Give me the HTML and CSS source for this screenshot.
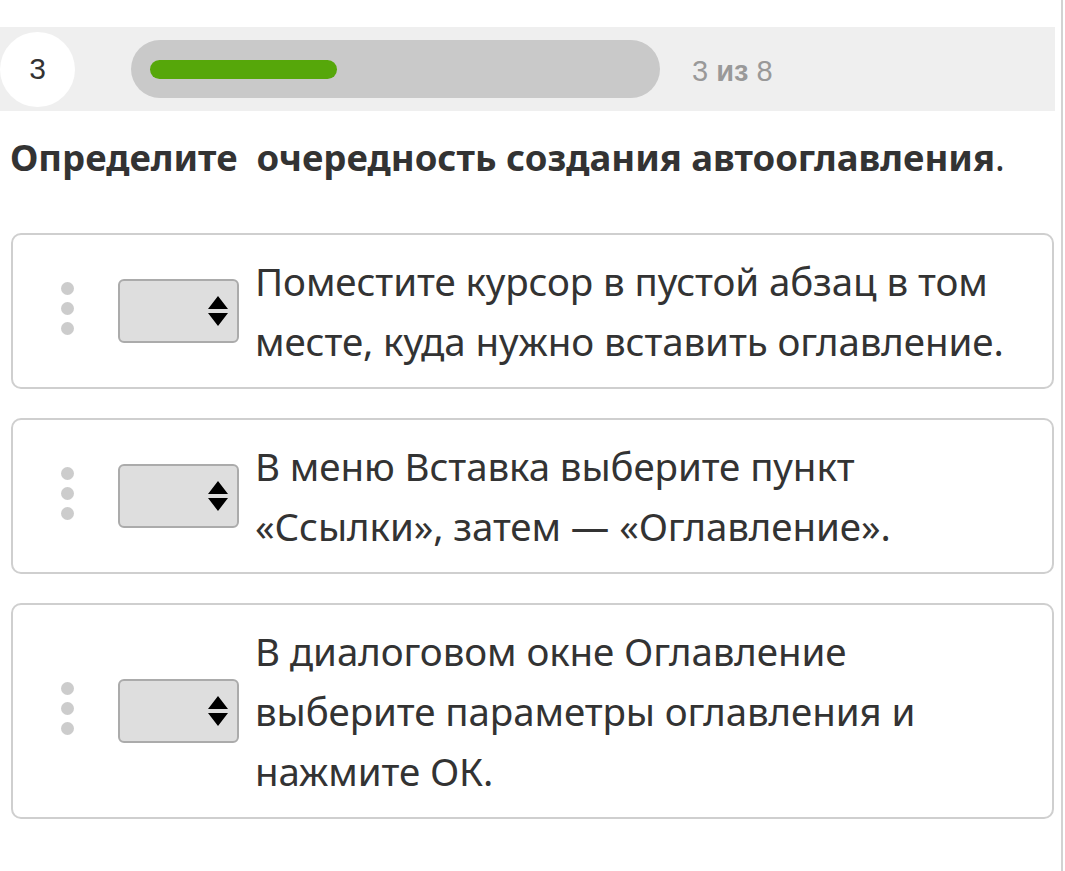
FILE: index.html
```html
<!DOCTYPE html>
<html lang="ru">
<head>
<meta charset="utf-8">
<title>Вопрос 3</title>
<link rel="stylesheet" href="styles.css">
</head>
<body>
<div class="page">
  <div class="topbar">
    <div class="num">3</div>
    <div class="track"><div class="fill" style="width:187px"></div></div>
    <div class="count">3 <b>из</b> 8</div>
  </div>
  <h1 class="title">Определите&nbsp; очередность создания автооглавления<span class="period">.</span></h1>
  <div class="list">
    <div class="card">
      <div class="handle"><i></i><i></i><i></i></div>
      <div class="select"><svg class="arrows" width="20" height="30" viewBox="0 0 20 30"><path d="M10 0 L20 13 L0 13 Z M0 17 L20 17 L10 30 Z" fill="#000"/></svg></div>
      <div class="text">Поместите курсор в пустой абзац в том месте, куда нужно вставить оглавление.</div>
    </div>
    <div class="card">
      <div class="handle"><i></i><i></i><i></i></div>
      <div class="select"><svg class="arrows" width="20" height="30" viewBox="0 0 20 30"><path d="M10 0 L20 13 L0 13 Z M0 17 L20 17 L10 30 Z" fill="#000"/></svg></div>
      <div class="text">В меню Вставка выберите пункт «Ссылки», затем — «Оглавление».</div>
    </div>
    <div class="card">
      <div class="handle"><i></i><i></i><i></i></div>
      <div class="select"><svg class="arrows" width="20" height="30" viewBox="0 0 20 30"><path d="M10 0 L20 13 L0 13 Z M0 17 L20 17 L10 30 Z" fill="#000"/></svg></div>
      <div class="text">В диалоговом окне Оглавление выберите параметры оглавления и нажмите ОК.</div>
    </div>
  </div>
</div>
</body>
</html>
```

FILE: styles.css
```css
html, body {
  margin: 0;
  padding: 0;
  background: #fff;
}
body {
  font-family: "Noto Sans", "Open Sans", sans-serif;
  color: #333;
}
.page {
  width: 1061px;
  min-height: 871px;
  border-right: 2px solid #d2d2d2;
  padding-top: 27px;
  box-sizing: content-box;
}
.topbar {
  width: 1055px;
  height: 84px;
  background: #efefef;
  display: flex;
  align-items: center;
}
.num {
  width: 75px;
  height: 75px;
  border-radius: 50%;
  background: #fff;
  display: flex;
  align-items: center;
  justify-content: center;
  font-family: "Liberation Sans", Arial, sans-serif;
  font-size: 30px;
  color: #333;
  flex: none;
}
.track {
  margin-left: 56px;
  width: 529px;
  height: 58px;
  border-radius: 29px;
  background: #c9c9c9;
  display: flex;
  align-items: center;
  padding-left: 19px;
  box-sizing: border-box;
  flex: none;
}
.fill {
  height: 19px;
  border-radius: 10px;
  background: #56a70a;
}
.count {
  margin-left: 32px;
  font-family: "Liberation Sans", Arial, sans-serif;
  font-size: 29px;
  color: #999;
  padding-top: 4px;
}
.count b {
  font-weight: bold;
}
.title {
  margin: 23px 0 0 10px;
  font-size: 36.5px;
  line-height: 46px;
  font-weight: 700;
  color: #333;
  letter-spacing: 0;
  white-space: nowrap;
}
.period {
  font-weight: 400;
}
.list {
  margin-top: 53px;
  margin-left: 11px;
  width: 1043px;
  display: flex;
  flex-direction: column;
  gap: 29px;
}
.card {
  border: 2px solid #cfcfcf;
  border-radius: 10px;
  padding: 16px 0 16px 0;
  display: flex;
  align-items: center;
}
.handle {
  width: 13px;
  margin-left: 48px;
  margin-bottom: 6px;
  display: flex;
  flex-direction: column;
  gap: 7px;
  flex: none;
}
.handle i {
  display: block;
  width: 13px;
  height: 13px;
  border-radius: 50%;
  background: #cccccc;
}
.select {
  margin-left: 44px;
  width: 121px;
  height: 64px;
  box-sizing: border-box;
  border: 2px solid #ababab;
  border-radius: 6px;
  background: #dedede;
  display: flex;
  align-items: center;
  justify-content: flex-end;
  padding-right: 9px;
  flex: none;
}
.text {
  margin-left: 16px;
  font-size: 38.5px;
  line-height: 60px;
  letter-spacing: -0.1px;
  color: #333;
  padding-right: 28px;
}
```
